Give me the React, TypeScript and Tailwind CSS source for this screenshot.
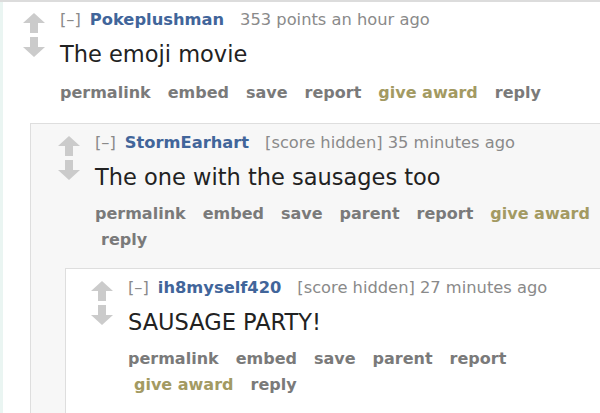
import type { ReactNode } from 'react';

type Btn = { label: string; gold?: boolean };

const ArrowUp = () => (
  <svg width="22" height="20" viewBox="0 0 22 20">
    <path d="M11 0 L22 10 L15 10 L15 20 L7 20 L7 10 L0 10 Z" fill="#cbcbcb" />
  </svg>
);

const ArrowDown = () => (
  <svg width="22" height="20" viewBox="0 0 22 20">
    <path d="M7 0 L15 0 L15 10 L22 10 L11 20 L0 10 L7 10 Z" fill="#cbcbcb" />
  </svg>
);

function Comment({
  author,
  meta,
  body,
  buttons,
  children,
  btnTop = 'mt-[10px]',
}: {
  author: string;
  meta: string;
  body: string;
  buttons: Btn[];
  children?: ReactNode;
  btnTop?: string;
}) {
  return (
    <div className="flex">
      <div className="w-[22px] shrink-0 mt-[3px] flex flex-col gap-[4px]">
        <ArrowUp />
        <ArrowDown />
      </div>
      <div className="ml-[15px] flex-1 min-w-0">
        <div className="flex items-baseline text-[16.3px] leading-[20px] text-[#8a8a8a] whitespace-nowrap">
          <span>[–]</span>
          <span className="ml-[9px] font-bold text-[#41659a]">{author}</span>
          <span className="ml-[16px]">{meta}</span>
        </div>
        <div className="mt-[10px] text-[22.5px] leading-[28px] text-[#222]">{body}</div>
        <ul className={`${btnTop} flex flex-wrap text-[16px] leading-[26px] font-bold text-[#7a7a7a]`}>
          {buttons.map((b, i) => (
            <li
              key={b.label}
              className={`${i === 0 ? '' : 'pl-[6px]'} pr-[11px] whitespace-nowrap ${b.gold ? 'text-[#a39a62]' : ''}`}
            >
              {b.label}
            </li>
          ))}
        </ul>
        {children}
      </div>
    </div>
  );
}

export default function App() {
  const top: Btn[] = [
    { label: 'permalink' },
    { label: 'embed' },
    { label: 'save' },
    { label: 'report' },
    { label: 'give award', gold: true },
    { label: 'reply' },
  ];
  const nested: Btn[] = [
    { label: 'permalink' },
    { label: 'embed' },
    { label: 'save' },
    { label: 'parent' },
    { label: 'report' },
    { label: 'give award', gold: true },
    { label: 'reply' },
  ];

  return (
    <div
      className="w-[600px] h-[413px] overflow-hidden bg-white border-t-2 border-[#dcdcdc] relative"
      style={{ fontFamily: '"DejaVu Sans", Verdana, sans-serif' }}
    >
      {/* faint left edge tint */}
      <div className="absolute left-0 top-0 bottom-0 w-[3px] bg-[#eaf5f2]" />
      <div className="w-[606px] -ml-[4px] pl-[27px] pt-[8px]">
        <Comment
          author="Pokeplushman"
          meta="353 points an hour ago"
          body="The emoji movie"
          buttons={top}
          btnTop="mt-[12px]"
        >
          <div className="mt-[17px] -ml-[30px] border-t border-l border-[#dedede] bg-[#f7f7f7] pl-[27px] pt-[9px] pb-[15px]">
            <Comment
              author="StormEarhart"
              meta="[score hidden] 35 minutes ago"
              body="The one with the sausages too"
              buttons={nested}
            >
              <div className="mt-[15px] -ml-[30px] border-t border-l border-[#dedede] bg-white pl-[25px] pt-[9px] pb-[20px]">
                <Comment
                  author="ih8myself420"
                  meta="[score hidden] 27 minutes ago"
                  body="SAUSAGE PARTY!"
                  buttons={nested}
                />
              </div>
            </Comment>
          </div>
        </Comment>
      </div>
    </div>
  );
}
